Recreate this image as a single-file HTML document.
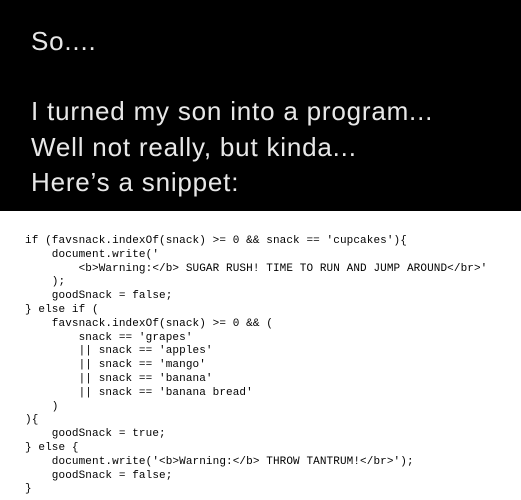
<!DOCTYPE html>
<html><head><style>
html,body{margin:0;padding:0;width:521px;height:500px;overflow:hidden;background:#fff}
.top{position:absolute;left:0;top:0;width:521px;height:211px;background:#000;color:#e8e8e8;font-family:"Liberation Sans",sans-serif;font-size:26px;}
.top div{position:absolute;left:31px;white-space:nowrap;letter-spacing:0.8px}
pre{position:absolute;left:25px;top:235px;margin:0;font-family:"Liberation Mono",monospace;font-size:11px;letter-spacing:0.1px;line-height:13.8px;color:#000}
</style></head><body>
<div class="top">
<div style="top:26px">So....</div>
<div style="top:96px">I turned my son into a program...</div>
<div style="top:132px">Well not really, but kinda...</div>
<div style="top:167px">Here’s a snippet:</div>
</div>
<pre>if (favsnack.indexOf(snack) &gt;= 0 &amp;&amp; snack == 'cupcakes'){
    document.write('
        &lt;b&gt;Warning:&lt;/b&gt; SUGAR RUSH! TIME TO RUN AND JUMP AROUND&lt;/br&gt;'
    );
    goodSnack = false;
} else if (
    favsnack.indexOf(snack) &gt;= 0 &amp;&amp; (
        snack == 'grapes'
        || snack == 'apples'
        || snack == 'mango'
        || snack == 'banana'
        || snack == 'banana bread'
    )
){
    goodSnack = true;
} else {
    document.write('&lt;b&gt;Warning:&lt;/b&gt; THROW TANTRUM!&lt;/br&gt;');
    goodSnack = false;
}</pre>
</body></html>
